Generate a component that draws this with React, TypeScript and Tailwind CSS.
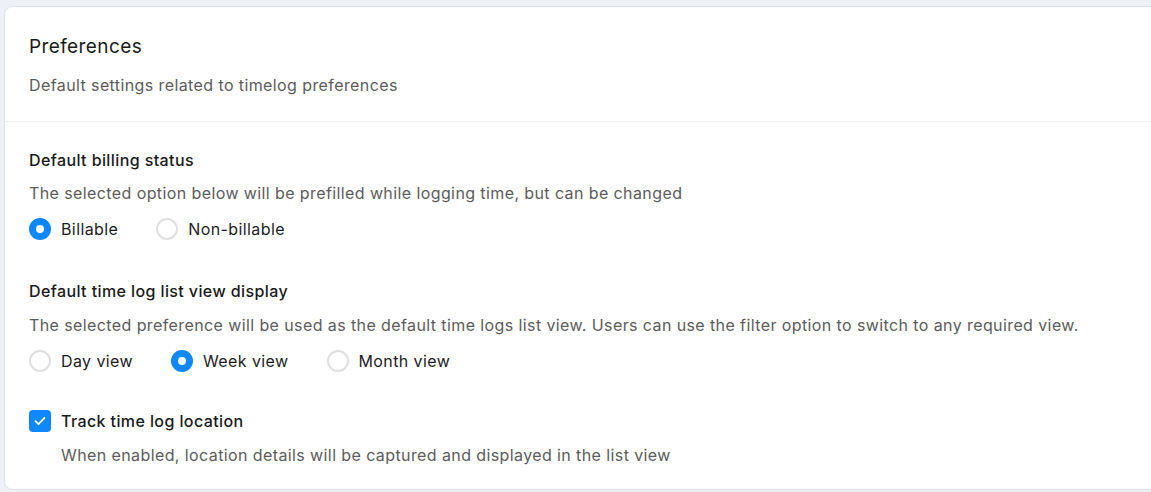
import { useState } from "react";

type RadioProps = { label: string; checked: boolean; onSelect: () => void };

function Radio({ label, checked, onSelect }: RadioProps) {
  return (
    <button type="button" onClick={onSelect} className="flex items-center gap-[10px] h-6">
      {checked ? (
        <span className="w-[22px] h-[22px] rounded-full bg-[#0f87ff] flex items-center justify-center">
          <span className="w-[8px] h-[8px] rounded-full bg-white" />
        </span>
      ) : (
        <span className="w-[22px] h-[22px] rounded-full border-2 border-[#e0e0e0] bg-white" />
      )}
      <span className="text-[16px] text-[#1d1d1f]">{label}</span>
    </button>
  );
}

export default function App() {
  const [billing, setBilling] = useState("billable");
  const [view, setView] = useState("week");
  const [track, setTrack] = useState(true);

  return (
    <div
      className="w-[1151px] h-[492px] bg-[#edf0f5] pt-[6px] pl-[4px] overflow-hidden tracking-[0.4px]"
      style={{ fontFamily: "Inter, 'Noto Sans', sans-serif" }}
    >
      <div className="w-[1160px] h-[484px] bg-white border border-[#dde3ec] rounded-[9px] leading-6">
        {/* header */}
        <div className="pt-[28px] pb-[24px] px-[24px] border-b border-[#efefef]">
          <h1 className="text-[19px] text-[#1a1a1a]">Preferences</h1>
          <p className="mt-[14px] text-[16px] text-[#5c5c5c]">Default settings related to timelog preferences</p>
        </div>

        <div className="px-[24px] pt-[26px]">
          {/* billing */}
          <h2 className="text-[16px] font-medium text-[#1a1a1a]">Default billing status</h2>
          <p className="mt-[9px] text-[16px] text-[#5c5c5c]">
            The selected option below will be prefilled while logging time, but can be changed
          </p>
          <div className="mt-[12px] flex items-center gap-[38px]">
            <Radio label="Billable" checked={billing === "billable"} onSelect={() => setBilling("billable")} />
            <Radio label="Non-billable" checked={billing === "non"} onSelect={() => setBilling("non")} />
          </div>

          {/* list view */}
          <h2 className="mt-[38px] text-[16px] font-medium text-[#1a1a1a]">Default time log list view display</h2>
          <p className="mt-[10px] text-[16px] text-[#5c5c5c]">
            The selected preference will be used as the default time logs list view. Users can use the filter option to switch to any required view.
          </p>
          <div className="mt-[12px] flex items-center gap-[38px]">
            <Radio label="Day view" checked={view === "day"} onSelect={() => setView("day")} />
            <Radio label="Week view" checked={view === "week"} onSelect={() => setView("week")} />
            <Radio label="Month view" checked={view === "month"} onSelect={() => setView("month")} />
          </div>

          {/* location */}
          <button type="button" onClick={() => setTrack(!track)} className="mt-[36px] flex items-center gap-[10px] h-6">
            <span
              className={
                track
                  ? "w-[22px] h-[22px] rounded-[4px] bg-[#0f87ff] flex items-center justify-center"
                  : "w-[22px] h-[22px] rounded-[4px] border-2 border-[#e0e0e0]"
              }
            >
              {track && (
                <svg width="14" height="14" viewBox="0 0 14 14" fill="none">
                  <path d="M2.5 7.2l3 3 6-6.4" stroke="white" strokeWidth="1.8" strokeLinecap="round" strokeLinejoin="round" />
                </svg>
              )}
            </span>
            <span className="text-[16px] font-medium text-[#1a1a1a]">Track time log location</span>
          </button>
          <p className="mt-[10px] pl-[32px] text-[16px] text-[#5c5c5c]">
            When enabled, location details will be captured and displayed in the list view
          </p>
        </div>
      </div>
    </div>
  );
}
